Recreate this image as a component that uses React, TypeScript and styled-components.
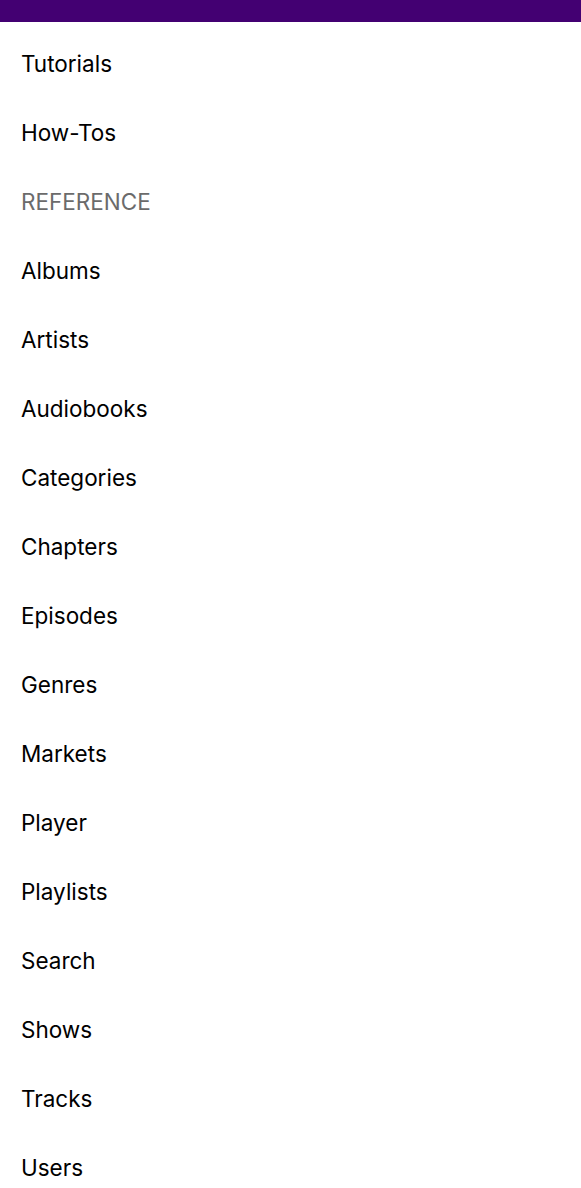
import React from "react";
import styled, { createGlobalStyle } from "styled-components";

const Global = createGlobalStyle`
  html, body { margin: 0; padding: 0; background: #fff; }
  body { font-family: Inter, "Noto Sans", sans-serif; }
`;

const TopBar = styled.div`
  height: 22px;
  background: #430072;
`;

const Nav = styled.nav`
  display: flex;
  flex-direction: column;
  padding: 7px 0 0 21px;
`;

const Item = styled.a<{ $heading?: boolean }>`
  display: flex;
  align-items: center;
  height: 69px;
  font-size: 22.5px;
  color: ${(p) => (p.$heading ? "#6b6b6b" : "#000")};
  text-decoration: none;
`;

const items = [
  "Tutorials",
  "How-Tos",
  "REFERENCE",
  "Albums",
  "Artists",
  "Audiobooks",
  "Categories",
  "Chapters",
  "Episodes",
  "Genres",
  "Markets",
  "Player",
  "Playlists",
  "Search",
  "Shows",
  "Tracks",
  "Users",
];

export default function App() {
  return (
    <>
      <Global />
      <TopBar />
      <Nav>
        {items.map((t) => (
          <Item key={t} $heading={t === "REFERENCE"}>
            {t}
          </Item>
        ))}
      </Nav>
    </>
  );
}
